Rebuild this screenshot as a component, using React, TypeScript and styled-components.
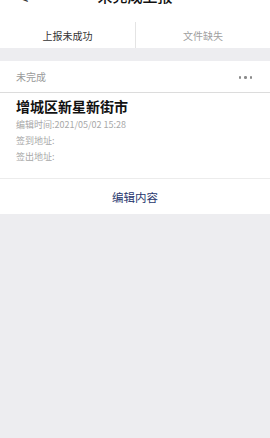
import styled, { createGlobalStyle } from "styled-components";

const GlobalStyle = createGlobalStyle`
  html, body {
    margin: 0;
    padding: 0;
    background: #ededf0;
    font-family: "Noto Sans CJK SC", "Noto Sans", sans-serif;
  }
`;

const Page = styled.div`
  width: 270px;
  min-height: 438px;
  overflow: hidden;
  background: #ededf0;
`;

// Nav bar is scrolled partly off the top of the view.
const NavBar = styled.div`
  height: 44px;
  margin-top: -24px;
  display: grid;
  grid-template-columns: 40px 1fr 40px;
  align-items: center;
  background: #ffffff;
`;

const Back = styled.span`
  display: flex;
  justify-content: center;
  padding-left: 8px;
  margin-top: -2px;
  font-size: 16px;
  color: #333;
`;

const Title = styled.h1`
  margin: -6px 0 0;
  text-align: center;
  font-size: 15px;
  font-weight: 500;
  color: #111;
`;

const Tabs = styled.div`
  height: 28px;
  display: grid;
  grid-template-columns: 1fr 1fr;
  background: #ffffff;
`;

interface TabProps {
  $active?: boolean;
}
const Tab = styled.div<TabProps>`
  display: flex;
  align-items: center;
  justify-content: center;
  padding-top: 2px;
  font-size: 10px;
  color: ${(p) => (p.$active ? "#333" : "#a0a0a0")};
  & + & {
    border-left: 1px solid #e4e4e4;
    margin-top: 2px;
    padding-top: 0;
  }
`;

const Card = styled.div`
  margin-top: 13px;
  background: #ffffff;
`;

const CardHeader = styled.div`
  height: 31px;
  display: flex;
  align-items: center;
  justify-content: space-between;
  padding: 0 16px;
  border-bottom: 1px solid #dcdcdc;
`;

const Status = styled.span`
  font-size: 10px;
  color: #9a9a9a;
`;

const Dots = styled.span`
  display: flex;
  gap: 3px;
  margin-right: 2px;
  margin-top: 2px;
`;

const Dot = styled.i`
  width: 2.5px;
  height: 2.5px;
  border-radius: 50%;
  background: #8a8a8a;
`;

const CardBody = styled.div`
  padding: 2px 16px 13px;
  border-bottom: 1px solid #ececec;
`;

const Market = styled.div`
  font-size: 14px;
  font-weight: 700;
  line-height: 22px;
  color: #111;
`;

const InfoLine = styled.div`
  font-size: 9px;
  line-height: 16px;
  color: #a8a8a8;
`;

const CardFooter = styled.div`
  height: 35px;
  display: flex;
  align-items: center;
  justify-content: center;
  font-size: 11.5px;
  color: #2a386e;
`;

const App = () => (
  <Page>
    <GlobalStyle />
    <NavBar>
      <Back>&lt;</Back>
      <Title>未完成上报</Title>
      <span />
    </NavBar>
    <Tabs>
      <Tab $active>上报未成功</Tab>
      <Tab>文件缺失</Tab>
    </Tabs>
    <Card>
      <CardHeader>
        <Status>未完成</Status>
        <Dots>
          <Dot />
          <Dot />
          <Dot />
        </Dots>
      </CardHeader>
      <CardBody>
        <Market>增城区新星新街市</Market>
        <InfoLine>编辑时间:2021/05/02 15:28</InfoLine>
        <InfoLine>签到地址:</InfoLine>
        <InfoLine>签出地址:</InfoLine>
      </CardBody>
      <CardFooter>编辑内容</CardFooter>
    </Card>
  </Page>
);

export default App;
